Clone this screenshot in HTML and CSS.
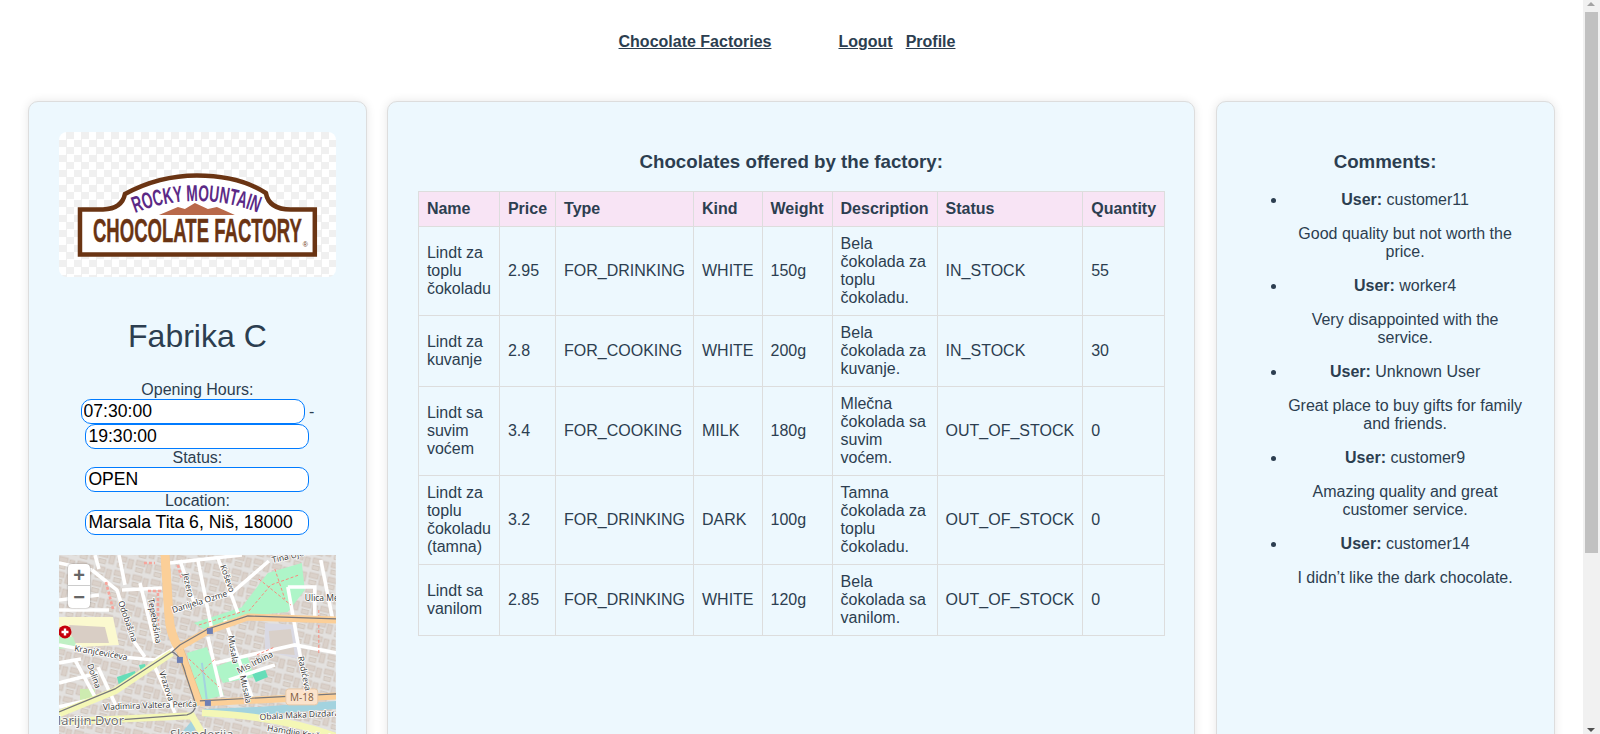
FILE: index.html
```html
<!DOCTYPE html>
<html lang="en">
<head>
    <meta charset="UTF-8">
    <meta name="viewport" content="width=device-width, initial-scale=1.0">
    <title>Fabrika C</title>
    <link rel="stylesheet" href="styles.css">
</head>
<body>
    <nav class="top-nav">
        <a href="#" class="nav-main">Chocolate Factories</a>
        <a href="#" class="nav-logout">Logout</a>
        <a href="#">Profile</a>
    </nav>

    <main class="factory-page">
        <!-- Factory info -->
        <section class="card factory-card">
            <svg class="logo" viewBox="0 0 277 145" role="img" aria-label="Rocky Mountain Chocolate Factory">
                <path class="logo-frame" d="M21 77.5H44C56 77 64 72 66 62C90 49 115 43.5 138 43.5C165 43.5 190 50 207 61C209 72 218 77.5 232 77.5H256V122.5H21Z"/>
                <polygon class="logo-hill" points="100,83 119,75 126,77 136,71 149,77 158,75 176,83"/>
                <path id="logo-arc" class="logo-arc" d="M76 81Q138 57 200 81"/>
                <text class="logo-top"><textPath href="#logo-arc" textLength="126" lengthAdjust="spacingAndGlyphs">ROCKY MOUNTAIN</textPath></text>
                <text class="logo-main" x="34" y="110" textLength="209" lengthAdjust="spacingAndGlyphs">CHOCOLATE FACTORY</text>
                <text class="logo-reg" x="244" y="115">®</text>
            </svg>

            <h1>Fabrika C</h1>

            <div class="factory-info">
                <div>Opening Hours:</div>
                <input type="text" value="07:30:00" readonly> - <input type="text" value="19:30:00" readonly>
                <div>Status:</div>
                <input type="text" value="OPEN" readonly>
                <div>Location:</div>
                <input type="text" value="Marsala Tita 6, Niš, 18000" readonly>
            </div>

            <div class="map">
                <svg viewBox="0 0 277 330">
                    <defs>
                        <pattern id="blocks" width="19" height="15" patternUnits="userSpaceOnUse" patternTransform="rotate(14)">
                            <rect width="19" height="15" fill="#e3e1df"/>
                            <rect x="1" y="1" width="9" height="5" fill="#dad1ca" stroke="#c9bcb1" stroke-width=".6"/>
                            <rect x="12" y="2" width="5" height="9" fill="#dad1ca" stroke="#c9bcb1" stroke-width=".6"/>
                            <rect x="2" y="8.5" width="7" height="4" fill="#dcd4cd" stroke="#c9bcb1" stroke-width=".6"/>
                        </pattern>
                    </defs>
                    <rect width="277" height="330" fill="url(#blocks)"/>

                    <!-- land use -->
                    <polygon points="0,62 54,62 60,90 20,92 0,88" fill="#fbf9cf"/>
                    <polygon points="10,70 46,72 50,88 14,88" fill="#d9cec5"/>
                    <polygon points="0,80 14,82 18,92 0,94" fill="#bff0c4"/>
                    <polygon points="183,52 209,18 243,8 246,35 229,57 189,61" fill="#aef5c8"/>
                    <polygon points="135,68 190,50 192,62 148,76" fill="#aef5c8"/>
                    <polygon points="128,98 148,92 165,140 142,146" fill="#aef5c8"/>
                    <polygon points="156,112 188,100 196,122 164,128" fill="#aef5c8"/>
                    <polygon points="206,68 236,70 240,104 206,96" fill="#d9d9e3"/>
                    <polygon points="210,76 232,74 236,100 212,98" fill="#d9d0c9"/>
                    <rect x="21" y="134" width="15" height="14" fill="#cdebb0"/>
                    <polygon points="58,122 76,116 78,124 60,130" fill="#66ddb8"/>
                    <polygon points="80,110 86,109 89,118 83,120" fill="#66ddb8"/>
                    <polygon points="193,118 206,114 209,122 197,127" fill="#66ddb8"/>

                    <!-- river -->
                    <path class="river" d="M145 158L200 156L278 150"/>
                    <path class="river river-thin" d="M143 108L146 130L148 146"/>
                    <path class="river" d="M118 190L138 166"/>

                    <!-- streets -->
                    <g class="street">
                        <path d="M33 15L58 35L74 85L86 102"/>
                        <path d="M0 8L33 15"/>
                        <path d="M111 8L183 0"/>
                        <path d="M63 35L103 33"/>
                        <path d="M81 28L96 88"/>
                        <path d="M121 5L136 50"/>
                        <path d="M139 5L153 75"/>
                        <path d="M159 3L179 58"/>
                        <path d="M114 57L173 38L210 6"/>
                        <path d="M0 90L63 102L96 105L116 93"/>
                        <path d="M16 105L36 142"/>
                        <path d="M39 112L59 155"/>
                        <path d="M96 112L116 158"/>
                        <path d="M149 82L163 142"/>
                        <path d="M166 65L193 142"/>
                        <path d="M156 108L236 90L278 98"/>
                        <path d="M229 32L239 88L249 142"/>
                        <path d="M0 128L39 118"/>
                        <path d="M229 32H256V62"/>
                        <path d="M262 5L274 65"/>
                        <path d="M170 125L216 110"/>
                        <path d="M0 108L22 104"/>
                        <path d="M0 152L30 145"/>
                        <path d="M40 40L0 45"/>
                        <path d="M0 55H50"/>
                        <path d="M60 0L66 30"/>
                        <path d="M36 0L40 14"/>
                    </g>
                    <g class="footway">
                        <path d="M190 56L212 30L240 20"/>
                        <path d="M200 24L232 50"/>
                        <path d="M216 14L226 44"/>
                        <path d="M140 70L186 56"/>
                        <path d="M130 104L160 132"/>
                        <path d="M132 128L156 104"/>
                        <path d="M198 100L216 92"/>
                        <path d="M260 55V100"/>
                    </g>
                    <g class="footway footway-wide">
                        <path d="M47 27L54 54"/>
                        <path d="M89 36H103"/>
                        <path d="M99 38V72"/>
                        <path d="M119 10L123 24"/>
                        <path d="M85 8H96"/>
                    </g>

                    <!-- big roads -->
                    <path class="road-yellow" d="M0 159L56 136L113 98"/>
                    <path class="road-yellow" d="M0 167L133 161L150 190"/>
                    <path class="road-yellow" d="M143 158C190 160 240 168 278 182"/>
                    <path class="road-case" d="M106 -2L110 60Q111 80 121 95L133 128L141 150"/>
                    <path class="road-orange road-wide" d="M106 -2L110 60Q111 80 121 95"/>
                    <path class="road-orange" d="M121 95L133 128L141 150"/>
                    <path class="road-orange" d="M121 92L149 76L189 62L278 65"/>
                    <path class="road-orange" d="M141 148L278 141"/>
                    <path class="rail" d="M0 157L56 134L113 97L121 90L149 74L189 61L278 64"/>
                    <path class="rail" d="M113 97Q122 100 127 120L137 150Q136 158 128 160L60 165L0 166"/>
                    <path class="rail" d="M141 146L278 139"/>

                    <rect class="stop" x="148" y="73" width="6" height="6"/>
                    <rect class="stop" x="118" y="102" width="6" height="6"/>
                    <rect class="stop" x="146" y="145" width="6" height="6"/>

                    <!-- hospital -->
                    <circle cx="6" cy="77" r="6.5" fill="#c6000b"/>
                    <path d="M6 73.5V80.5M2.5 77H9.5" stroke="#fff" stroke-width="2.4"/>

                    <!-- road shield -->
                    <rect x="227" y="134" width="32" height="16" rx="3" fill="#fbe3cc" stroke="#e8c9a8"/>
                    <text class="shield" x="243" y="146" text-anchor="middle">M-18</text>

                    <!-- labels -->
                    <g class="label">
                        <text transform="translate(214 8) rotate(-13)">Tina Ujevića</text>
                        <text transform="translate(124 19) rotate(78)">Jezero</text>
                        <text transform="translate(161 11) rotate(70)">Koševo</text>
                        <text transform="translate(114 58) rotate(-17)">Danijela Ozme</text>
                        <text transform="translate(59 47) rotate(71)">Odobašina</text>
                        <text transform="translate(89 44) rotate(80)">Tepebašina</text>
                        <text x="246" y="46">Ulica Me</text>
                        <text transform="translate(15 96) rotate(10)">Kranjčevićeva</text>
                        <text transform="translate(28 110) rotate(70)">Dolina</text>
                        <text transform="translate(100 117) rotate(72)">Vrazova</text>
                        <text transform="translate(169 81) rotate(80)">Musala</text>
                        <text transform="translate(180 119) rotate(-27)">Mis Irbina</text>
                        <text transform="translate(181 121) rotate(78)">Musala</text>
                        <text transform="translate(239 102) rotate(78)">Radićeva</text>
                        <text transform="translate(44 155) rotate(-2)">Vladimira Valtera Perića</text>
                        <text transform="translate(201 165) rotate(-3)">Obala Maka Dizdara</text>
                        <text transform="translate(208 176) rotate(9)">Hamdije Kreševljakovića</text>
                        <text class="label-big" x="65" y="170" text-anchor="end">Marijin Dvor</text>
                        <text class="label-big" x="111" y="184">Skenderija</text>
                    </g>
                </svg>
                <div class="zoom-control">
                    <span>+</span>
                    <span>−</span>
                </div>
            </div>
        </section>

        <!-- Chocolates table -->
        <section class="card">
            <h3>Chocolates offered by the factory:</h3>
            <table class="chocolate-table">
                <thead>
                    <tr>
                        <th>Name</th>
                        <th>Price</th>
                        <th>Type</th>
                        <th>Kind</th>
                        <th>Weight</th>
                        <th>Description</th>
                        <th>Status</th>
                        <th>Quantity</th>
                    </tr>
                </thead>
                <tbody>
                    <tr>
                        <td>Lindt za toplu čokoladu</td>
                        <td>2.95</td>
                        <td>FOR_DRINKING</td>
                        <td>WHITE</td>
                        <td>150g</td>
                        <td>Bela čokolada za toplu čokoladu.</td>
                        <td>IN_STOCK</td>
                        <td>55</td>
                    </tr>
                    <tr>
                        <td>Lindt za kuvanje</td>
                        <td>2.8</td>
                        <td>FOR_COOKING</td>
                        <td>WHITE</td>
                        <td>200g</td>
                        <td>Bela čokolada za kuvanje.</td>
                        <td>IN_STOCK</td>
                        <td>30</td>
                    </tr>
                    <tr>
                        <td>Lindt sa suvim voćem</td>
                        <td>3.4</td>
                        <td>FOR_COOKING</td>
                        <td>MILK</td>
                        <td>180g</td>
                        <td>Mlečna čokolada sa suvim voćem.</td>
                        <td>OUT_OF_STOCK</td>
                        <td>0</td>
                    </tr>
                    <tr>
                        <td>Lindt za toplu čokoladu (tamna)</td>
                        <td>3.2</td>
                        <td>FOR_DRINKING</td>
                        <td>DARK</td>
                        <td>100g</td>
                        <td>Tamna čokolada za toplu čokoladu.</td>
                        <td>OUT_OF_STOCK</td>
                        <td>0</td>
                    </tr>
                    <tr>
                        <td>Lindt sa vanilom</td>
                        <td>2.85</td>
                        <td>FOR_DRINKING</td>
                        <td>WHITE</td>
                        <td>120g</td>
                        <td>Bela čokolada sa vanilom.</td>
                        <td>OUT_OF_STOCK</td>
                        <td>0</td>
                    </tr>
                </tbody>
            </table>
        </section>

        <!-- Comments -->
        <section class="card comments-card">
            <h3>Comments:</h3>
            <ul>
                <li>
                    <p><strong>User:</strong> customer11</p>
                    <p>Good quality but not worth the price.</p>
                </li>
                <li>
                    <p><strong>User:</strong> worker4</p>
                    <p>Very disappointed with the service.</p>
                </li>
                <li>
                    <p><strong>User:</strong> Unknown User</p>
                    <p>Great place to buy gifts for family and friends.</p>
                </li>
                <li>
                    <p><strong>User:</strong> customer9</p>
                    <p>Amazing quality and great customer service.</p>
                </li>
                <li>
                    <p><strong>User:</strong> customer14</p>
                    <p>I didn’t like the dark chocolate.</p>
                </li>
            </ul>
        </section>
    </main>

    <!-- Window scrollbar -->
    <div class="scrollbar">
        <span class="scroll-up"></span>
        <span class="scroll-thumb"></span>
        <span class="scroll-down"></span>
    </div>
</body>
</html>
```

FILE: styles.css
```css
body {
    font-family: "Liberation Sans", Arial, sans-serif;
    font-size: 16px;
    color: #2c3e50;
    margin: 0;
    padding-right: 17px;
}

.top-nav {
    display: flex;
    justify-content: center;
    height: 101px;
    padding: 33px 9px 0 0;
    box-sizing: border-box;
}

.top-nav a {
    color: #2c3e50;
    font-weight: bold;
    margin-right: 13px;
}

.top-nav .nav-main {
    margin-right: 67px;
}

.top-nav a:last-child {
    margin-right: 0;
}

.factory-page {
    display: grid;
    grid-template-columns: 338.8px 808.6px 339px;
    gap: 20.1px;
    padding: 0 28px 20px;
}

.card {
    background-color: #edf8fe;
    border: 1px solid #ddd;
    border-radius: 10px;
    box-shadow: 0 0 10px rgba(0, 0, 0, 0.1);
    padding: 30px;
    text-align: center;
}

h1 {
    font-size: 32px;
    font-weight: normal;
    margin: 41px 0 26px;
}

h3 {
    font-size: 18.72px;
    margin: 18.72px 0;
}

.logo {
    display: block;
    width: 100%;
    height: 145px;
    border-radius: 8px;
    background: repeating-conic-gradient(#f0f0f0 0 25%, #fff 0 50%) 0 0 / 15px 15px;
}

.logo-frame {
    fill: #fff;
    stroke: #6a3413;
    stroke-width: 4.5;
}

.logo-hill {
    fill: #b9694a;
}

.logo-arc {
    fill: none;
}

.logo-top {
    font-size: 23px;
    font-weight: bold;
    fill: #5b2a86;
}

.logo-main {
    font-size: 33px;
    font-weight: bold;
    fill: #6a3413;
    stroke: #6a3413;
    stroke-width: 0.4;
}

.logo-reg {
    font-size: 7px;
    fill: #6a3413;
}

.factory-info input {
    width: 224px;
    height: 25px;
    box-sizing: border-box;
    padding: 1px 2px;
    border: 1px solid #007bff;
    border-radius: 10px;
    font-family: "Liberation Sans", Arial, sans-serif;
    font-size: 17.6px;
    color: #000;
}

.map {
    position: relative;
    height: 330px;
    margin-top: 20px;
    overflow: hidden;
}

.map svg {
    display: block;
    width: 100%;
}

.zoom-control {
    position: absolute;
    top: 9px;
    left: 9px;
    width: 22px;
    background-color: #fff;
    box-shadow: 0 0 2px rgba(0, 0, 0, 0.4);
    border-radius: 4px;
    color: #666;
}

.zoom-control span {
    display: block;
    height: 22px;
    line-height: 22px;
    font-size: 20px;
    font-weight: bold;
    text-align: center;
}

.zoom-control span:first-child {
    border-bottom: 1px solid #ccc;
    box-sizing: border-box;
}

.river {
    fill: none;
    stroke: #a3d3df;
    stroke-width: 8;
}

.river-thin {
    stroke-width: 2;
}

.street path {
    fill: none;
    stroke: #fff;
    stroke-width: 3.6;
}

.footway path {
    fill: none;
    stroke: #fa8a7c;
    stroke-width: 1;
    stroke-dasharray: 3 2;
}

.footway-wide path {
    stroke: #f6a49b;
    stroke-width: 2.6;
}

.road-yellow {
    fill: none;
    stroke: #f4f7b6;
    stroke-width: 7;
}

.road-case {
    fill: none;
    stroke: #e8bb85;
    stroke-width: 8;
}

.road-orange {
    fill: none;
    stroke: #fbcf98;
    stroke-width: 7;
}

.road-wide {
    stroke-width: 9;
}

.rail {
    fill: none;
    stroke: #77777c;
    stroke-width: 1.2;
}

.stop {
    fill: #6d7fb4;
}

.shield {
    font-family: "Open Sans", sans-serif;
    font-size: 10px;
    fill: #7c5b3e;
}

.label text {
    font-family: "Open Sans", sans-serif;
    font-size: 8.5px;
    fill: #333;
    stroke: #fff;
    stroke-width: 1.6;
    paint-order: stroke;
}

.label .label-big {
    font-size: 13px;
    fill: #666;
}

.chocolate-table {
    width: 100%;
    border-collapse: collapse;
    text-align: left;
}

.chocolate-table th, .chocolate-table td {
    padding: 8px;
    border: 1px solid #ddd;
}

.chocolate-table th {
    background-color: #f8e4f5;
}

.comments-card li p {
    text-align: center;
}

.scrollbar {
    position: fixed;
    top: 0;
    right: 0;
    bottom: 0;
    width: 17px;
    background-color: #f1f1f1;
}

.scroll-thumb {
    position: absolute;
    top: 12px;
    left: 2px;
    width: 13px;
    height: 541px;
    background-color: #c1c1c1;
}

.scroll-up, .scroll-down {
    position: absolute;
    left: 4px;
    border-left: 4px solid transparent;
    border-right: 4px solid transparent;
}

.scroll-up {
    top: 2px;
    border-bottom: 4px solid #a3a3a3;
}

.scroll-down {
    bottom: 2px;
    border-top: 4px solid #505050;
}
```
